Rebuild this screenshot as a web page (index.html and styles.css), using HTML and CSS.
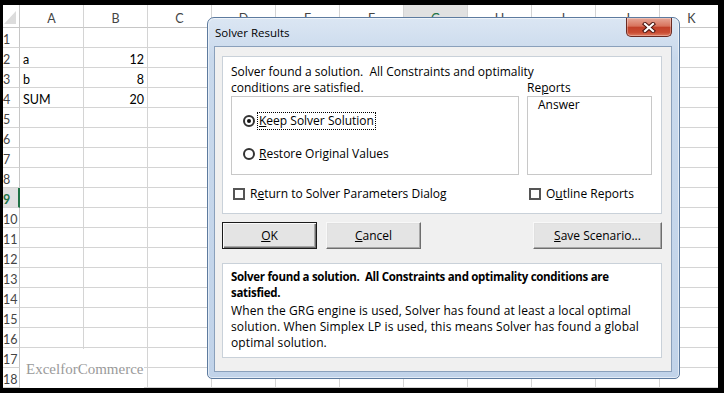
FILE: index.html
```html
<!DOCTYPE html>
<html>
<head>
<meta charset="utf-8">
<title>Solver Results</title>
<link rel="stylesheet" href="styles.css">
</head>
<body>
<div class="screen">
  <div class="sheet">
    <div class="row head">
      <div class="rh corner"><span class="tri"></span></div>
      <div class="c">A</div><div class="c">B</div><div class="c">C</div><div class="c">D</div><div class="c">E</div><div class="c">F</div><div class="c sel">G</div><div class="c">H</div><div class="c">I</div><div class="c">J</div><div class="c">K</div>
    </div>
    <div class="row"><div class="rh">1</div><div class="c"></div><div class="c"></div><div class="c"></div><div class="c"></div><div class="c"></div><div class="c"></div><div class="c"></div><div class="c"></div><div class="c"></div><div class="c"></div><div class="c"></div></div>
    <div class="row"><div class="rh">2</div><div class="c">a</div><div class="c num">12</div><div class="c"></div><div class="c"></div><div class="c"></div><div class="c"></div><div class="c"></div><div class="c"></div><div class="c"></div><div class="c"></div><div class="c"></div></div>
    <div class="row"><div class="rh">3</div><div class="c">b</div><div class="c num">8</div><div class="c"></div><div class="c"></div><div class="c"></div><div class="c"></div><div class="c"></div><div class="c"></div><div class="c"></div><div class="c"></div><div class="c"></div></div>
    <div class="row"><div class="rh">4</div><div class="c">SUM</div><div class="c num">20</div><div class="c"></div><div class="c"></div><div class="c"></div><div class="c"></div><div class="c"></div><div class="c"></div><div class="c"></div><div class="c"></div><div class="c"></div></div>
    <div class="row"><div class="rh">5</div><div class="c"></div><div class="c"></div><div class="c"></div><div class="c"></div><div class="c"></div><div class="c"></div><div class="c"></div><div class="c"></div><div class="c"></div><div class="c"></div><div class="c"></div></div>
    <div class="row"><div class="rh">6</div><div class="c"></div><div class="c"></div><div class="c"></div><div class="c"></div><div class="c"></div><div class="c"></div><div class="c"></div><div class="c"></div><div class="c"></div><div class="c"></div><div class="c"></div></div>
    <div class="row"><div class="rh">7</div><div class="c"></div><div class="c"></div><div class="c"></div><div class="c"></div><div class="c"></div><div class="c"></div><div class="c"></div><div class="c"></div><div class="c"></div><div class="c"></div><div class="c"></div></div>
    <div class="row"><div class="rh">8</div><div class="c"></div><div class="c"></div><div class="c"></div><div class="c"></div><div class="c"></div><div class="c"></div><div class="c"></div><div class="c"></div><div class="c"></div><div class="c"></div><div class="c"></div></div>
    <div class="row"><div class="rh selrow">9</div><div class="c"></div><div class="c"></div><div class="c"></div><div class="c"></div><div class="c"></div><div class="c"></div><div class="c"></div><div class="c"></div><div class="c"></div><div class="c"></div><div class="c"></div></div>
    <div class="row"><div class="rh">10</div><div class="c"></div><div class="c"></div><div class="c"></div><div class="c"></div><div class="c"></div><div class="c"></div><div class="c"></div><div class="c"></div><div class="c"></div><div class="c"></div><div class="c"></div></div>
    <div class="row"><div class="rh">11</div><div class="c"></div><div class="c"></div><div class="c"></div><div class="c"></div><div class="c"></div><div class="c"></div><div class="c"></div><div class="c"></div><div class="c"></div><div class="c"></div><div class="c"></div></div>
    <div class="row"><div class="rh">12</div><div class="c"></div><div class="c"></div><div class="c"></div><div class="c"></div><div class="c"></div><div class="c"></div><div class="c"></div><div class="c"></div><div class="c"></div><div class="c"></div><div class="c"></div></div>
    <div class="row"><div class="rh">13</div><div class="c"></div><div class="c"></div><div class="c"></div><div class="c"></div><div class="c"></div><div class="c"></div><div class="c"></div><div class="c"></div><div class="c"></div><div class="c"></div><div class="c"></div></div>
    <div class="row"><div class="rh">14</div><div class="c"></div><div class="c"></div><div class="c"></div><div class="c"></div><div class="c"></div><div class="c"></div><div class="c"></div><div class="c"></div><div class="c"></div><div class="c"></div><div class="c"></div></div>
    <div class="row"><div class="rh">15</div><div class="c"></div><div class="c"></div><div class="c"></div><div class="c"></div><div class="c"></div><div class="c"></div><div class="c"></div><div class="c"></div><div class="c"></div><div class="c"></div><div class="c"></div></div>
    <div class="row"><div class="rh">16</div><div class="c"></div><div class="c"></div><div class="c"></div><div class="c"></div><div class="c"></div><div class="c"></div><div class="c"></div><div class="c"></div><div class="c"></div><div class="c"></div><div class="c"></div></div>
    <div class="row"><div class="rh">17</div><div class="c"></div><div class="c"></div><div class="c"></div><div class="c"></div><div class="c"></div><div class="c"></div><div class="c"></div><div class="c"></div><div class="c"></div><div class="c"></div><div class="c"></div></div>
    <div class="row"><div class="rh">18</div><div class="c"></div><div class="c"></div><div class="c"></div><div class="c"></div><div class="c"></div><div class="c"></div><div class="c"></div><div class="c"></div><div class="c"></div><div class="c"></div><div class="c"></div></div>
  </div>

  <div class="watermark">ExcelforCommerce</div>

  <div class="dialog">
    <div class="titlebar">
      <span class="title">Solver Results</span>
      <span class="close">
        <svg width="14" height="11" viewBox="0 0 14 11">
          <path d="M3 2 L11 9 M11 2 L3 9" stroke="#4a1510" stroke-width="4.2" stroke-linecap="square" fill="none"/>
          <path d="M3 2 L11 9 M11 2 L3 9" stroke="#ffffff" stroke-width="2.2" stroke-linecap="square" fill="none"/>
        </svg>
      </span>
    </div>
    <div class="client">
      <div class="panel top">
        <p class="desc">Solver found a solution.&nbsp; All Constraints and optimality<br>conditions are satisfied.</p>
        <div class="rep-label">Re<u>p</u>orts</div>
        <div class="options">
          <div class="radio-row"><span class="radio on"></span><span class="focus"><u>K</u>eep Solver Solution</span></div>
          <div class="radio-row"><span class="radio"></span><span class="lbl"><u>R</u>estore Original Values</span></div>
        </div>
        <div class="list">Answer</div>
        <div class="check"><span class="box"></span><span>R<u>e</u>turn to Solver Parameters Dialog</span></div>
        <div class="check"><span class="box"></span><span>O<u>u</u>tline Reports</span></div>
      </div>
      <div class="buttons">
        <button class="btn default"><u>O</u>K</button>
        <button class="btn"><u>C</u>ancel</button>
        <button class="btn save"><u>S</u>ave Scenario...</button>
      </div>
      <div class="panel msg">
        <p class="bold">Solver found a solution.&nbsp; All Constraints and optimality conditions are<br>satisfied.</p>
        <p class="body">When the GRG engine is used, Solver has found at least a local optimal<br>solution. When Simplex LP is used, this means Solver has found a global<br>optimal solution.</p>
      </div>
    </div>
  </div>
</div>
</body>
</html>
```

FILE: styles.css
```css
* { box-sizing: border-box; }
html, body { margin: 0; padding: 0; background: #000; }

.screen {
  position: relative;
  width: 724px;
  height: 393px;
  background: #000;
  padding: 5px 6px 5px 3px;
  overflow: hidden;
}

/* spreadsheet */
.sheet {
  width: 715px;
  height: 383px;
  background: #fff;
  overflow: hidden;
  font-family: Lato, "Liberation Sans", sans-serif;
  font-size: 12.5px;
  color: #000;
}
.row { display: flex; height: 20px; }
.row.head { height: 23px; }

.rh {
  flex: 0 0 17px;
  height: 100%;
  border-right: 1px solid #c6c6c6;
  border-bottom: 1px solid #d4d4d4;
  color: #444;
  line-height: 19px;
  padding-top: 2px;
  white-space: nowrap;
  overflow: hidden;
}
.rh.selrow {
  background: #e1e1e1;
  color: #217346;
  font-weight: bold;
  border-right: 2px solid #217346;
}
.rh.corner {
  display: flex;
  align-items: flex-end;
  justify-content: flex-end;
  padding: 0 3px 3px 0;
  border-bottom: 1px solid #c6c6c6;
}
.tri {
  width: 0;
  height: 0;
  border-left: 12px solid transparent;
  border-bottom: 13px solid #dcdcdc;
}

.c {
  flex: 0 0 64px;
  height: 100%;
  border-right: 1px solid #d4d4d4;
  border-bottom: 1px solid #d4d4d4;
  padding: 2px 3px 0 3px;
  line-height: 19px;
  white-space: nowrap;
  overflow: hidden;
}
.c.num { text-align: right; padding-right: 3px; }
.head .c {
  text-align: center;
  color: #444;
  padding-top: 4px;
  line-height: 20px;
  border-bottom: 1px solid #c6c6c6;
}
.head .c.sel { background: #e1e1e1; color: #217346; border-bottom: 2px solid #217346; }

.watermark {
  position: absolute;
  left: 20px;
  top: 349px;
  width: 124px;
  height: 39px;
  background: #fff;
  font-family: "Liberation Serif", serif;
  font-size: 15px;
  color: #9a9a9a;
  padding: 11px 0 0 6px;
  line-height: 18px;
}

/* dialog */
.dialog {
  position: absolute;
  left: 207px;
  top: 17px;
  width: 473px;
  height: 362px;
  border: 1px solid #5d7b9f;
  border-radius: 7px 7px 5px 5px;
  background: linear-gradient(to bottom, #dbe6f3 0, #c9d9ec 40px, #c1d3e9 100%);
  box-shadow: inset 0 0 0 1px rgba(255,255,255,0.55);
  display: flex;
  flex-direction: column;
  font-family: "Open Sans", "Noto Sans", sans-serif;
  font-size: 12px;
  color: #000;
}
.titlebar {
  position: relative;
  height: 28px;
  flex: 0 0 28px;
  display: flex;
  align-items: center;
  padding-left: 7px;
}
.title { font-size: 11.5px; color: #000; }
.close {
  position: absolute;
  right: 7px;
  top: 0;
  width: 46px;
  height: 19px;
  border: 1px solid #6a2a22;
  border-top: none;
  border-radius: 0 0 5px 5px;
  background: linear-gradient(to bottom, #e7a797 0, #d8735d 45%, #c2412a 52%, #c94c32 80%, #de7d62 100%);
  box-shadow: inset 0 0 0 1px rgba(255,255,255,0.3);
  display: flex;
  align-items: center;
  justify-content: center;
}

.client {
  flex: 1;
  margin: 0 7px 6px 6px;
  border: 1px solid #8aa0bb;
  background: #f0f0f0;
  padding: 9px 9px 13px 7px;
  display: flex;
  flex-direction: column;
}

.panel {
  background: #fff;
  border: 1px solid #c9d1d9;
}
.panel.top {
  height: 158px;
  flex: 0 0 158px;
  padding: 7px 0 0 8px;
  display: grid;
  grid-template-columns: 288px 125px;
  grid-template-rows: 32px 79px 26px;
  column-gap: 8px;
  row-gap: 0;
}
.desc {
  margin: 0;
  line-height: 16px;
  white-space: nowrap;
}
.rep-label {
  align-self: end;
  line-height: 16px;
}
.options {
  border: 1px solid #c8c8c8;
  padding: 15px 0 0 11px;
  display: flex;
  flex-direction: column;
  gap: 15px;
}
.radio-row {
  display: flex;
  align-items: center;
  height: 18px;
}
.radio {
  width: 12px;
  height: 12px;
  border: 2px solid #333;
  border-radius: 50%;
  background: #fff;
  display: flex;
  align-items: center;
  justify-content: center;
  margin-right: 2px;
}
.radio.on::after {
  content: "";
  width: 4px;
  height: 4px;
  border-radius: 50%;
  background: #111;
}
.focus {
  border: 1px dotted #000;
  padding: 0 1px;
  line-height: 16px;
}
.lbl { padding: 0 2px; line-height: 16px; }
.list {
  border: 1px solid #c8c8c8;
  padding: 0 0 0 10px;
  line-height: 16px;
}
.check {
  align-self: end;
  height: 15px;
  display: flex;
  align-items: center;
  gap: 5px;
  padding-left: 2px;
  white-space: nowrap;
}
.box {
  width: 12px;
  height: 12px;
  border: 2px solid #555;
  background: #fff;
  flex: 0 0 12px;
}

.buttons {
  margin-top: 8px;
  display: flex;
  gap: 9px;
  height: 27px;
  flex: 0 0 27px;
}
.btn {
  font-family: inherit;
  font-size: 12px;
  color: #000;
  width: 95px;
  height: 27px;
  padding: 0;
  background: #e4e4e4;
  border: 1px solid;
  border-color: #f8f8f8 #6e6e6e #6e6e6e #f8f8f8;
  box-shadow: inset -1px -1px 0 #a8a8a8, inset 1px 1px 0 #e0e0e0;
}
.btn.default {
  border: 1px solid #1a1a1a;
  box-shadow: inset 1px 1px 0 #fafafa, inset -1px -1px 0 #6e6e6e, inset -2px -2px 0 #a8a8a8;
}
.btn.save { width: 129px; margin-left: auto; }

.panel.msg {
  margin-top: 14px;
  flex: 1;
  padding: 5px 8px 0 8px;
}
.msg p { margin: 0; line-height: 16px; white-space: nowrap; }
.msg .bold { font-weight: bold; font-size: 11.5px; letter-spacing: -0.3px; }
.msg .body { margin-top: 2px; letter-spacing: 0.1px; }
```
